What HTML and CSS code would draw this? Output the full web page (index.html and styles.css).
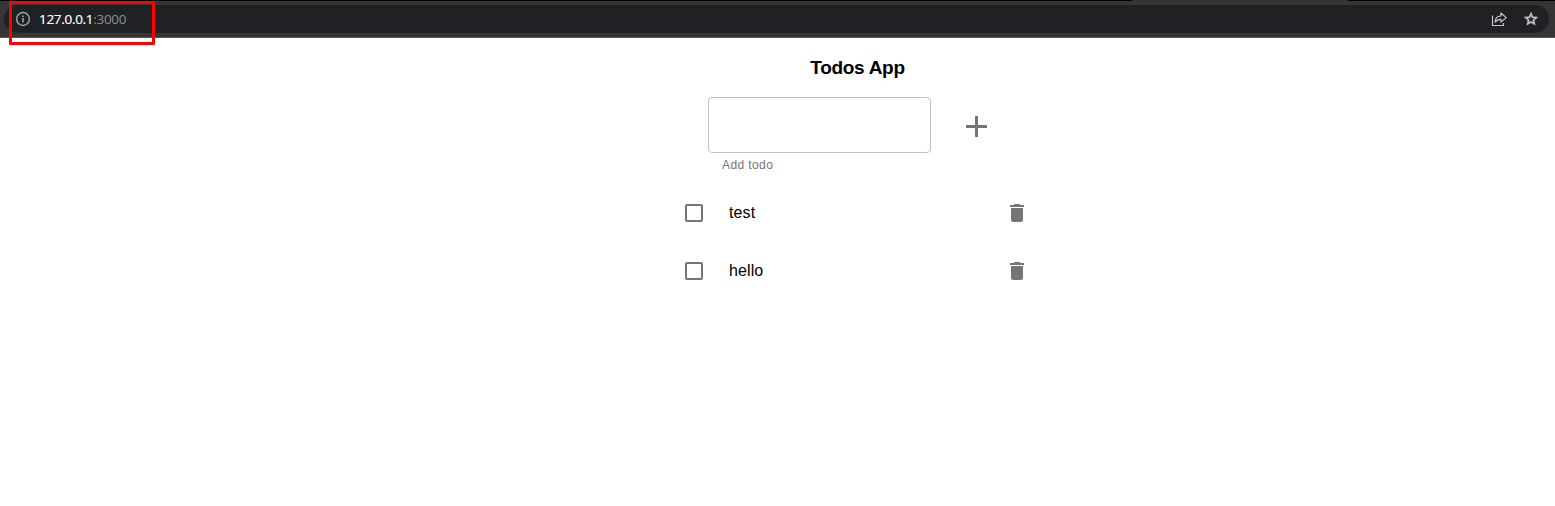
FILE: index.html
```html
<!DOCTYPE html>
<html lang="en">
<head>
<meta charset="utf-8">
<title>Todos App</title>
<link rel="stylesheet" href="styles.css">
</head>
<body>
<header class="toolbar">
  <div class="tab-edge"></div>
  <div class="address">
    <svg class="info" viewBox="0 0 16 16"><circle cx="8" cy="8" r="6.4" fill="none" stroke="currentColor" stroke-width="1.500"/><path d="M7.200 7h1.600v4.500H7.200zM7.200 4.400h1.600v1.500H7.200z" fill="currentColor"/></svg>
    <span class="url"><span class="host">127.0.0.1</span>:3000</span>
    <svg class="share" viewBox="0 0 16 16" fill="none" stroke="currentColor" stroke-width="1.200"><path d="M1.500 4.500v10H12.500v-2.500"/><path d="M4 11.200C4.200 7 6.300 5.200 9.900 5V2L15.200 6.600 9.900 11.100V8.300C7.300 8.300 5.500 9 4 11.200z" stroke-linejoin="round"/></svg>
    <svg class="star" viewBox="0 0 24 24"><path fill="currentColor" stroke="currentColor" stroke-width="1" d="M22 9.240l-7.190-.62L12 2 9.190 8.630 2 9.240l5.460 4.730L5.820 21 12 17.270 18.180 21l-1.630-7.030L22 9.240zM12 15.400l-3.760 2.270 1-4.280-3.320-2.880 4.380-.38L12 6.100l1.710 4.040 4.380.38-3.320 2.880 1 4.280L12 15.400z"/></svg>
  </div>
  <div class="highlight"></div>
</header>
<main class="app">
  <h3 class="title">Todos App</h3>
  <form class="add-form">
    <div class="field">
      <input class="input" type="text" aria-label="Add todo">
      <p class="helper">Add todo</p>
    </div>
    <svg class="plus" viewBox="5 5 14 14"><path d="M19 13h-6v6h-2v-6H5v-2h6V5h2v6h6v2z"/></svg>
  </form>
  <ul class="list">
    <li class="item">
      <svg class="icon" viewBox="0 0 24 24"><path d="M19 5v14H5V5h14m0-2H5c-1.100 0-2 .9-2 2v14c0 1.100.9 2 2 2h14c1.100 0 2-.9 2-2V5c0-1.100-.9-2-2-2z"/></svg>
      <span class="label">test</span>
      <svg class="icon" viewBox="0 0 24 24"><path d="M6 19c0 1.100.9 2 2 2h8c1.100 0 2-.9 2-2V7H6v12zM19 4h-3.500l-1-1h-5l-1 1H5v2h14V4z"/></svg>
    </li>
    <li class="item">
      <svg class="icon" viewBox="0 0 24 24"><path d="M19 5v14H5V5h14m0-2H5c-1.100 0-2 .9-2 2v14c0 1.100.9 2 2 2h14c1.100 0 2-.9 2-2V5c0-1.100-.9-2-2-2z"/></svg>
      <span class="label">hello</span>
      <svg class="icon" viewBox="0 0 24 24"><path d="M6 19c0 1.100.9 2 2 2h8c1.100 0 2-.9 2-2V7H6v12zM19 4h-3.500l-1-1h-5l-1 1H5v2h14V4z"/></svg>
    </li>
  </ul>
</main>
</body>
</html>
```
FILE: styles.css
```css
* { box-sizing: border-box; }
body { margin: 0; background: #fff; color: #000; font-family: "Liberation Sans", Arial, sans-serif; overflow: hidden; }
svg { display: block; flex: none; }

.toolbar { position: relative; height: 38px; padding: 0 6px 0 4px; background: #353535; border-bottom: 1px solid #555; }
.tab-edge { height: 1px; margin: 0 -6px 4px -4px; background: linear-gradient(to right, #000 1132px, #353535 1132px, #353535 1348px, #000 1348px); }
.address { display: flex; align-items: center; height: 28px; padding: 0 10px 0 11px; border-radius: 14px; background: #202124; color: #c4c7c9; }
.info { width: 16px; height: 16px; margin-right: 8px; color: #9aa0a6; }
.url { flex: 1; font: 13.500px/20px "Open Sans", "Noto Sans", sans-serif; letter-spacing: -0.300px; color: #8b8f94; }
.host { color: #fff; -webkit-text-stroke: 0.200px #fff; }
.share { width: 16px; height: 16px; margin-right: 16px; }
.star { width: 16px; height: 16px; }
.highlight { position: absolute; left: 9px; top: 1px; width: 146px; height: 44px; border: 3px solid #f00; border-radius: 1px; }

.app { width: 385px; margin-left: 665px; padding-top: 18px; }
.title { margin: 0; font-size: 19px; line-height: 23px; letter-spacing: -0.300px; text-align: center; }
.add-form { display: flex; margin: 18px 0 0 43px; }
.field { width: 223px; }
.input { display: block; width: 100%; height: 56px; padding: 0 14px; border: 1px solid #c1c1c1; border-radius: 4px; font: inherit; }
.helper { margin: 3px 14px 0; font-size: 12px; line-height: 18px; letter-spacing: 0.400px; color: #757575; }
.plus { width: 21px; height: 21px; margin: 19px 0 0 35px; fill: #757575; }
.list { margin: 10px 0 0; padding: 0; list-style: none; }
.item { display: flex; align-items: center; height: 58px; padding: 0 21px 0 17px; }
.icon { width: 24px; height: 24px; fill: #757575; }
.label { flex: 1; margin-left: 23px; font-size: 16px; line-height: 24px; letter-spacing: 0.100px; }
```
